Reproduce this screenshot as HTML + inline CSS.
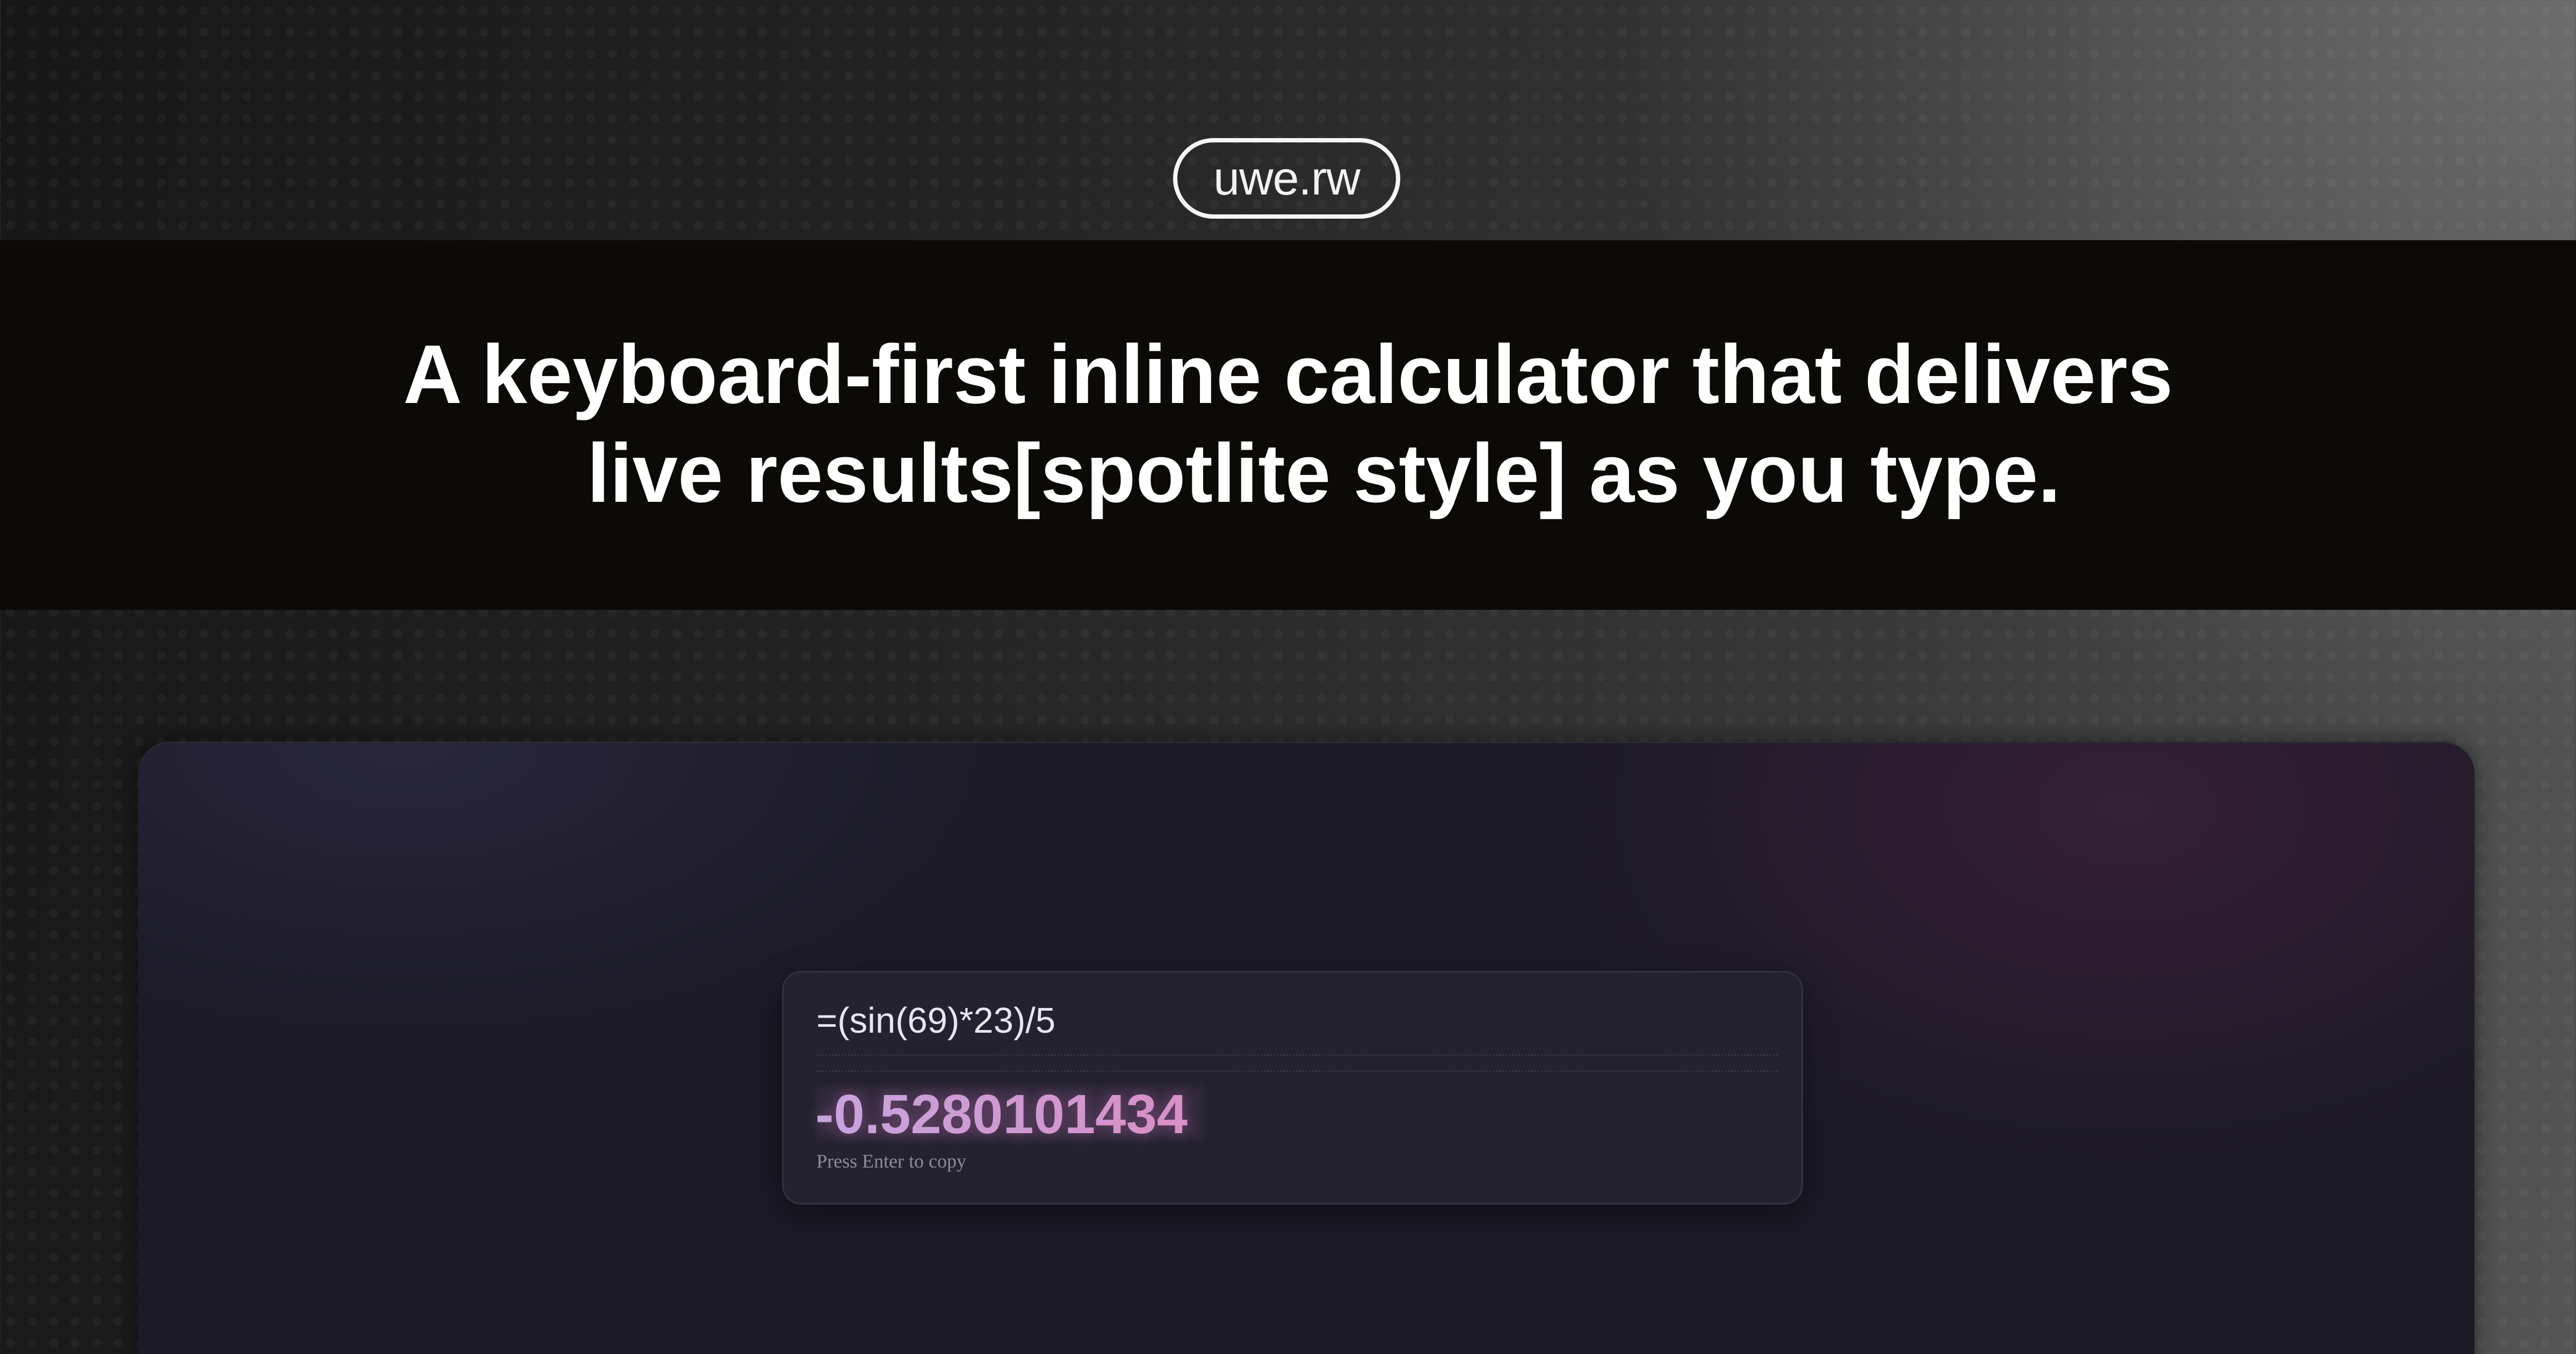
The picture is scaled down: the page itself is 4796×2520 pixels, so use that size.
<!DOCTYPE html>
<html><head><meta charset="utf-8"><style>
html,body{margin:0;padding:0;width:4796px;height:2520px;overflow:hidden;}
body{position:relative;
background:
radial-gradient(ellipse 1800px 1400px at 4796px 0px, rgba(140,140,140,0.5), rgba(140,140,140,0) 100%),
linear-gradient(100deg,#171717 0%,#232323 35%,#383838 70%,#555 100%);
font-family:"Liberation Sans",sans-serif;}
.dots{position:absolute;inset:0;background-image:radial-gradient(circle,rgba(255,255,255,0.035) 8px,rgba(255,255,255,0) 9px);background-size:40px 40px;}
.pill{position:absolute;left:2184px;top:257px;width:407px;height:134px;border:8px solid #f4f5f7;border-radius:80px;color:#f2f2f2;font-size:88px;text-align:center;line-height:134px;letter-spacing:-1px;}
.band{position:absolute;left:0;top:447px;width:4796px;height:688px;background:#0c0a07;}
.h{position:absolute;left:0;width:4796px;text-align:center;color:#fff;font-weight:bold;font-size:155px;white-space:nowrap;}
.h span{display:inline-block;transform:scaleX(0.98);transform-origin:center;}
.card{position:absolute;left:257px;top:1380px;width:4350px;height:1200px;border-radius:60px;
background:
radial-gradient(ellipse 1100px 700px at 3700px 120px, rgba(90,40,80,0.4), rgba(90,40,80,0) 100%),
radial-gradient(ellipse 1200px 600px at 500px 0px, rgba(60,55,90,0.4), rgba(60,55,90,0) 100%),
#1b1a25;border-top:3px solid #2c2a36;box-shadow:0 0 40px rgba(0,0,0,0.5);}
.box{position:absolute;left:1456px;top:1807px;width:1895px;height:429px;border-radius:36px;background:#24222e;border:3px solid #33313e;box-shadow:0 20px 60px rgba(0,0,0,0.4);}
.expr{position:absolute;left:1520px;top:1860px;font-size:67px;color:#e8e5f2;line-height:80px;white-space:nowrap;}
.dl{position:absolute;left:1520px;width:1790px;height:0;border-top:3px dotted #363442;}
.hl{position:absolute;left:1520px;top:2022px;width:720px;height:98px;background:rgba(80,55,90,0.3);filter:blur(6px);}
.res{position:absolute;left:1518px;top:2016px;font-size:103px;font-weight:bold;line-height:115px;white-space:nowrap;color:#d29bd4;
background:linear-gradient(90deg,#c7a4de,#d88fc6);-webkit-background-clip:text;background-clip:text;-webkit-text-fill-color:transparent;filter:drop-shadow(0 0 14px rgba(210,130,200,0.45));}
.hint{position:absolute;left:1520px;top:2140px;font-family:"Liberation Serif",serif;font-size:36px;color:#8e8b9a;white-space:nowrap;}
</style></head><body>
<div class="dots"></div>
<div class="pill">uwe.rw</div>
<div class="band"></div>
<div class="h" style="top:608px"><span>A keyboard-first inline calculator that delivers</span></div>
<div class="h" style="top:792px;padding-left:134px;box-sizing:border-box"><span>live results[spotlite style] as you type.</span></div>
<div class="card"></div>
<div class="box"></div>
<div class="expr">=(sin(69)*23)/5</div>
<div class="dl" style="top:1962px"></div>
<div class="dl" style="top:1992px"></div>
<div class="hl"></div>
<div class="res">-0.5280101434</div>
<div class="hint">Press Enter to copy</div>
</body></html>
